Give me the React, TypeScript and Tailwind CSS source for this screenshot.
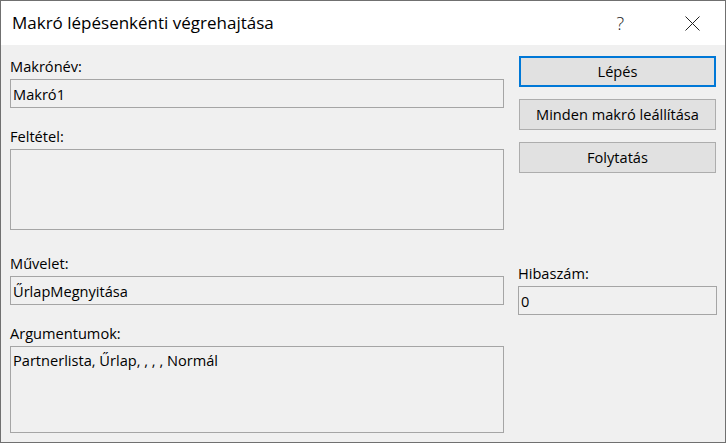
const FONT = "font-['Open_Sans','Noto_Sans',sans-serif]";

function Field({ label, value, labelH, boxH, multi }: { label: string; value?: string; labelH: string; boxH: string; multi?: boolean }) {
  return (
    <>
      <div className={`${labelH} flex items-end pb-[3px] leading-[20px]`}>{label}</div>
      <div
        className={`${boxH} border border-[#a5a5a5] bg-[#f0f0f0] px-[2px] leading-[20px] flex ${multi ? "items-start pt-[3px]" : "items-center"}`}
      >
        {value}
      </div>
    </>
  );
}

function Btn({ children, active }: { children: string; active?: boolean }) {
  return (
    <div
      className={`h-[31px] flex items-center justify-center bg-[#e1e1e1] ${
        active ? "border-2 border-[#0078d7]" : "border border-[#adadad]"
      }`}
    >
      {children}
    </div>
  );
}

export default function App() {
  return (
    <div className={`w-[726px] h-[443px] border border-[#707070] bg-[#f0f0f0] flex flex-col text-[14.6px] text-black ${FONT}`}>
      {/* Title bar */}
      <div className="h-[44px] bg-white flex items-center pl-[11px] pr-[25px]">
        <span className="text-[17px] flex-1">Makró lépésenkénti végrehajtása</span>
        <span className="text-[18px] font-light text-[#222] mr-[61px]">?</span>
        <svg width="15" height="15" viewBox="0 0 15 15" className="mt-[1px]">
          <path d="M0.5 0.5 L14.5 14.5 M14.5 0.5 L0.5 14.5" stroke="#222" strokeWidth="1" fill="none" />
        </svg>
      </div>

      {/* Body */}
      <div className="flex-1 flex pl-[9px] pr-[9px] gap-[15px]">
        <div className="w-[494px] flex flex-col">
          <Field label="Makrónév:" value="Makró1" labelH="h-[34px]" boxH="h-[29px]" />
          <Field label="Feltétel:" labelH="h-[41px]" boxH="h-[81px]" multi />
          <Field label="Művelet:" value="ŰrlapMegnyitása" labelH="h-[46px]" boxH="h-[29px]" />
          <Field label="Argumentumok:" value="Partnerlista, Űrlap, , , , Normál" labelH="h-[41px]" boxH="h-[87px]" multi />
        </div>

        <div className="flex-1 flex flex-col pt-[11px]">
          <div className="flex flex-col gap-[12px]">
            <Btn active>Lépés</Btn>
            <Btn>Minden makró leállítása</Btn>
            <Btn>Folytatás</Btn>
          </div>
          <div className="mt-[86px] -mx-[1px] flex flex-col">
            <Field label="Hibaszám:" value="0" labelH="h-[27px]" boxH="h-[29px]" />
          </div>
        </div>
      </div>
    </div>
  );
}
